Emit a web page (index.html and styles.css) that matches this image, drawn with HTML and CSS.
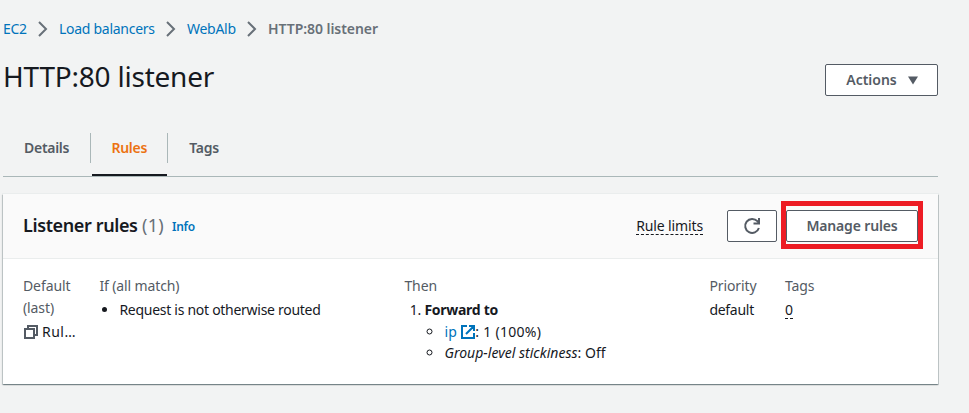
FILE: index.html
```html
<!DOCTYPE html>
<html lang="en">
<head>
<meta charset="utf-8">
<title>HTTP:80 listener</title>
<link rel="stylesheet" href="styles.css">
</head>
<body>
<main class="page">
  <nav class="crumbs">
    <a class="c-ec2">EC2</a>
    <svg class="chev" viewBox="0 0 10 16"><path d="M1 1l7 7-7 7"/></svg>
    <a class="c-lb">Load balancers</a>
    <svg class="chev" viewBox="0 0 10 16"><path d="M1 1l7 7-7 7"/></svg>
    <a class="c-web">WebAlb</a>
    <svg class="chev" viewBox="0 0 10 16"><path d="M1 1l7 7-7 7"/></svg>
    <b>HTTP:80 listener</b>
  </nav>
  <header class="heading">
    <h1>HTTP:80 listener</h1>
    <button class="btn actions"><span>Actions</span><svg width="10" height="9" viewBox="0 0 10 9"><path d="M0 .5h10L5 8.5z" fill="#545b64"/></svg></button>
  </header>
  <div class="tabs">
    <div class="tab details"><span>Details</span></div>
    <div class="tab active"><span>Rules</span></div>
    <div class="tab tags"><span>Tags</span></div>
  </div>
  <section class="panel">
    <div class="panel-head">
      <h2>Listener rules</h2><span class="count">(1)</span><a class="info">Info</a>
      <span class="limits">Rule limits</span>
      <button class="btn refresh" aria-label="Refresh"><svg width="18" height="18" viewBox="0 0 18 18" fill="none" stroke="#545b64" stroke-width="2"><path d="M15.900 11a7 7 0 1 1-1.500-6.800l1.600 1.600"/><path d="M16 1v5.500h-5.500"/></svg></button>
      <div class="mark"><button class="btn manage"><span>Manage rules</span></button></div>
    </div>
    <div class="rule">
      <div class="col first">
        <div class="label">Default<br>(last)</div>
        <div class="arn"><svg width="14" height="14" viewBox="0 0 14 14" fill="none" stroke="#545b64" stroke-width="2"><path d="M1 4h9v9H1z"/><path d="M4 4V1h9v9h-3"/></svg><span>Rul…</span></div>
      </div>
      <div class="col cond">
        <div class="label match">If (all match)</div>
        <ul><li class="request">Request is not otherwise routed</li></ul>
      </div>
      <div class="col then">
        <div class="label">Then</div>
        <ol><li><b>Forward to</b>
          <ul class="sub">
            <li class="target"><a>ip</a> <svg class="ext" width="14" height="14" viewBox="0 0 14 14" fill="none" stroke="#0073bb" stroke-width="2"><path d="M6 1H1v12h12V8M8 1h5v5M13 1L5 9"/></svg>: 1 (100%)</li>
            <li class="sticky"><i>Group-level stickiness</i>: Off</li>
          </ul></li></ol>
      </div>
      <div class="col prio">
        <div class="label">Priority</div>
        <div>default</div>
      </div>
      <div class="col">
        <div class="label">Tags</div>
        <div><span class="zero">0</span></div>
      </div>
    </div>
  </section>
</main>
</body>
</html>
```
FILE: styles.css
```css
* { box-sizing: border-box; }
body { margin: 0; background: #f2f3f3; color: #16191f; font: 14px/22px "Noto Sans", "Open Sans", sans-serif; letter-spacing: -.28px; }
.page { width: 939px; padding: 18px 1px 0 3px; height: 413px; overflow: hidden; }
a { color: #0073bb; }
h1, h2 { margin: 0; font-weight: 400; }
.crumbs { display: flex; align-items: center; height: 22px; white-space: nowrap; }
.crumbs a, .crumbs b { flex: none; }
.crumbs b { color: #687078; font-weight: 600; letter-spacing: -.05px; }
.c-ec2 { width: 24px; }
.c-lb { width: 96px; }
.c-web { width: 49px; }
.chev { width: 10px; height: 16px; margin: 0 11px; flex: none; fill: none; stroke: #687078; stroke-width: 2; }
.heading { display: flex; justify-content: space-between; height: 56px; margin-top: 19px; padding-top: 5px; }
.heading h1 { font-size: 28px; line-height: 36px; margin-top: -6px; letter-spacing: -.22px; white-space: nowrap; }
.btn { font: 600 14px/22px "Noto Sans", "Open Sans", sans-serif; color: #545b64; background: #fff; border: 1px solid #545b64; border-radius: 2px; padding: 0; height: 32px; display: flex; align-items: center; justify-content: center; white-space: nowrap; }
.actions { width: 113px; gap: 11px; padding-left: 1px; }
.tabs { display: flex; height: 62px; border-bottom: 1px solid #aab7b8; padding-top: 18px; }
.tab { font-weight: 600; color: #545b64; height: 30px; padding-top: 4px; border-right: 1px solid #aab7b8; white-space: nowrap; }
.details { width: 88px; padding-left: 21px; }
.active { width: 77px; height: 43px; padding-left: 20.5px; color: #ec7211; border-right: 0; background: linear-gradient(#16191f,#16191f) 1px 100%/75px 2px no-repeat; }
.tags { border-left: 1px solid #aab7b8; border-right: 0; padding-left: 21.3px; margin-left: -1px; }
.panel { margin-top: 17px; height: 190px; background: #fff; box-shadow: 0 1px 1px rgba(0,28,36,.3), 1px 1px 1px rgba(0,28,36,.15), -1px 1px 1px rgba(0,28,36,.15), 0 0 0 1px #eaeded; }
.panel-head { display: flex; align-items: center; height: 65px; padding: 0 15px 0 20px; border-bottom: 1px solid #eaeded; background: #fafafa; white-space: nowrap; }
h2 { width: 119px; font-size: 18px; font-weight: 600; line-height: 22px; letter-spacing: -.38px; margin-top: -2px; }
.count { width: 30px; font-size: 18px; color: #687078; letter-spacing: .3px; margin-top: -2px; }
.info { font-size: 12px; font-weight: 600; padding-top: 2px; }
.limits { margin-left: auto; margin-right: 24px; line-height: 17px; border-bottom: 1px dashed #16191f; letter-spacing: -.13px; }
.refresh { width: 50px; }
.mark { border: 5px solid #ed1c24; height: 48px; width: 142px; margin: -2px 0 0 4px; padding: 4px 0 2px; flex: none; }
.manage { width: 132px; letter-spacing: -.15px; }
.rule { display: flex; padding: 16px 20px; white-space: nowrap; }
.label { color: #545b64; letter-spacing: -.1px; }
.match { letter-spacing: -.12px; }
.col > :nth-child(2) { margin-top: 2px; }
.first { width: 76px; }
.arn { display: flex; align-items: center; gap: 4px; padding-left: 1px; letter-spacing: .5px; }
.cond { width: 305px; padding-left: .4px; }
.then { width: 305px; padding-left: .4px; }
.prio { width: 76px; padding-left: .4px; }
ul, ol { margin: 0; padding: 0 0 0 20px; }
.sub { list-style: circle; line-height: 22px; }
.target { letter-spacing: .3px; height: 21px; line-height: 21px; }
.sticky { letter-spacing: .02px; }
.ext { vertical-align: -2px; }
.zero { display: inline-block; line-height: 17px; border-bottom: 1px dashed #16191f; }
```
